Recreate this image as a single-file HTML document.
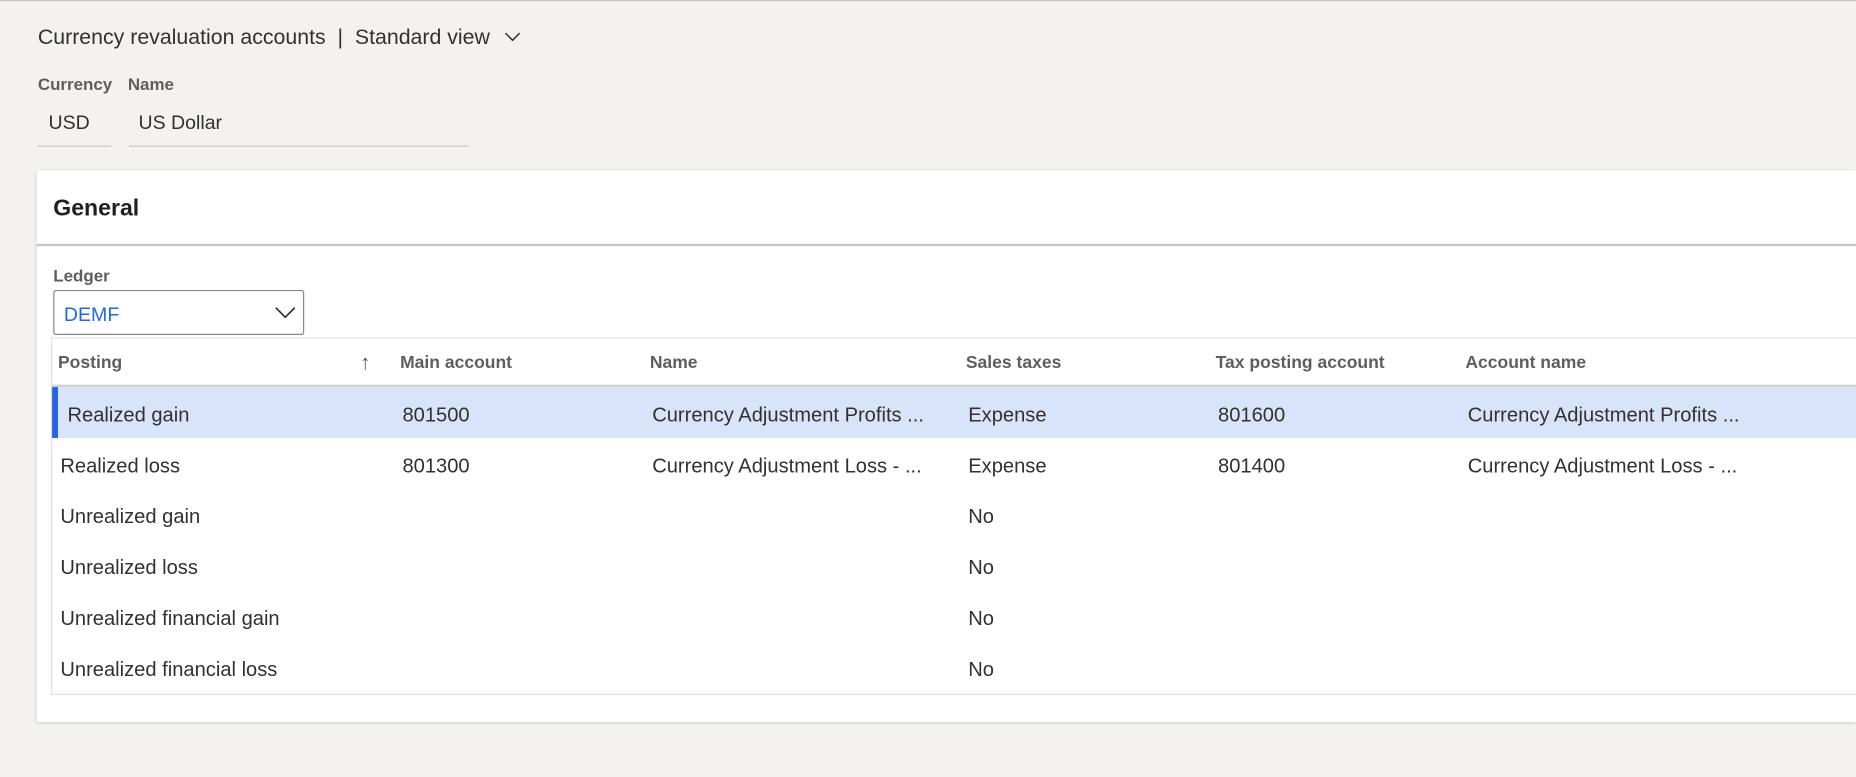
<!DOCTYPE html>
<html><head><meta charset="utf-8"><style>
html,body{margin:0;padding:0;width:1856px;height:776px;overflow:hidden;background:#f3f2f1;}
#w{position:absolute;left:0;top:0;width:1568px;height:656px;transform:scale(1.18367);transform-origin:0 0;font-family:"Liberation Sans",sans-serif;color:#323130;}
.a{position:absolute;white-space:nowrap;}
.lbl{font-size:14.3px;font-weight:bold;color:#605e5c;}
.hd{font-size:14.8px;font-weight:bold;color:#605e5c;top:299px;}
.row{position:absolute;left:44px;right:0;height:43px;font-size:17px;}
.row span{position:absolute;top:14px;white-space:nowrap;}
</style></head><body><div id="w">
<div class="a" style="left:0;right:0;top:0;height:1px;background:#c8c6c4"></div>
<div class="a" style="left:32px;top:21px;font-size:18px;">Currency revaluation accounts&nbsp;&nbsp;|&nbsp;&nbsp;Standard view</div>
<svg class="a" style="left:426px;top:26px" width="14" height="10"><path d="M1 2 L7 8 L13 2" fill="none" stroke="#323130" stroke-width="1.3"/></svg>
<div class="a lbl" style="left:32px;top:64px">Currency</div>
<div class="a lbl" style="left:108px;top:64px">Name</div>
<div class="a" style="left:41px;top:95px;font-size:16.5px">USD</div>
<div class="a" style="left:117px;top:95px;font-size:16.5px">US Dollar</div>
<div class="a" style="left:32px;top:123px;width:62px;height:1px;background:#c8c6c4"></div>
<div class="a" style="left:109px;top:123px;width:287px;height:1px;background:#c8c6c4"></div>
<div class="a" style="left:31px;top:144px;right:0;height:466px;background:#fff;box-shadow:0 1px 3px rgba(0,0,0,.18)"></div>
<div class="a" style="left:45px;top:165px;font-size:19.5px;font-weight:bold;color:#201f1e">General</div>
<div class="a" style="left:31px;top:206px;right:0;height:2px;background:#c8c6c4"></div>
<div class="a lbl" style="left:45px;top:226px">Ledger</div>
<div class="a" style="left:45px;top:245px;width:210px;height:36px;border:1px solid #8a8886;border-radius:2px;background:#fff"></div>
<div class="a" style="left:54px;top:257px;font-size:16.5px;color:#2266e3">DEMF</div>
<svg class="a" style="left:232px;top:258px" width="18" height="12"><path d="M1 2 L9 10 L17 2" fill="none" stroke="#323130" stroke-width="1.4"/></svg>
<div class="a" style="left:43px;top:285px;width:1px;height:302px;background:#e1dfdd"></div>
<div class="a" style="left:43px;top:285px;right:0;height:1px;background:#e1dfdd"></div>
<div class="a" style="left:43px;top:586px;right:0;height:1px;background:#e1dfdd"></div>
<div class="a hd" style="left:49px">Posting</div>
<div class="a" style="left:304px;top:296px;font-size:18px;color:#605e5c">↑</div>
<div class="a hd" style="left:338px">Main account</div>
<div class="a hd" style="left:549px">Name</div>
<div class="a hd" style="left:816px">Sales taxes</div>
<div class="a hd" style="left:1027px">Tax posting account</div>
<div class="a hd" style="left:1238px">Account name</div>
<div class="a" style="left:44px;top:325px;right:0;height:2px;background:#d2d0ce"></div>
<div class="row" style="top:327px;background:#d8e4f9"><div style="position:absolute;left:0;top:0;width:5px;height:43px;background:#2266e3"></div>
<span style="left:13px">Realized gain</span><span style="left:296px">801500</span><span style="left:507px">Currency Adjustment Profits ...</span><span style="left:774px">Expense</span><span style="left:985px">801600</span><span style="left:1196px">Currency Adjustment Profits ...</span></div>
<div class="row" style="top:370px"><span style="left:7px">Realized loss</span><span style="left:296px">801300</span><span style="left:507px">Currency Adjustment Loss - ...</span><span style="left:774px">Expense</span><span style="left:985px">801400</span><span style="left:1196px">Currency Adjustment Loss - ...</span></div>
<div class="row" style="top:413px"><span style="left:7px">Unrealized gain</span><span style="left:774px">No</span></div>
<div class="row" style="top:456px"><span style="left:7px">Unrealized loss</span><span style="left:774px">No</span></div>
<div class="row" style="top:499px"><span style="left:7px">Unrealized financial gain</span><span style="left:774px">No</span></div>
<div class="row" style="top:542px"><span style="left:7px">Unrealized financial loss</span><span style="left:774px">No</span></div>
</div></body></html>
